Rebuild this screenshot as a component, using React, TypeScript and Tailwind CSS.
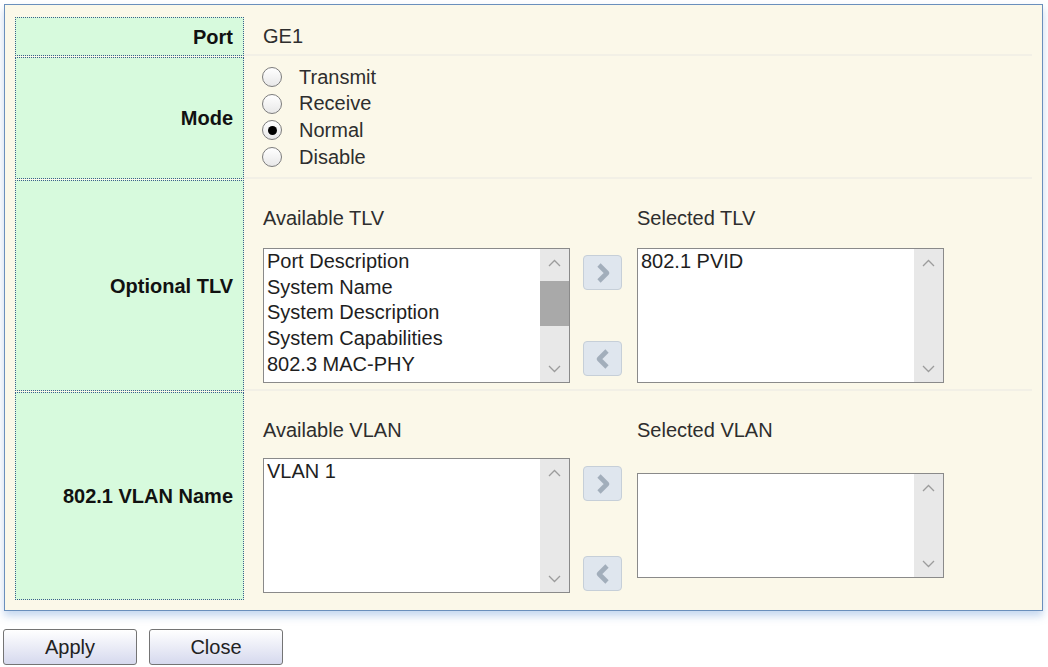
import React from "react";

const Chevron = ({ dir }: { dir: "up" | "down" }) => (
  <svg width="13" height="8" viewBox="0 0 13 8">
    <polyline
      points={dir === "up" ? "1,7 6.5,1.5 12,7" : "1,1 6.5,6.5 12,1"}
      fill="none"
      stroke="#9c9c9c"
      strokeWidth="1.3"
    />
  </svg>
);

const MoveButton = ({ dir }: { dir: "right" | "left" }) => (
  <div className="flex h-[35px] w-[39px] items-center justify-center rounded-[4px] border border-[#c6cfd8] bg-[#dfe6ee]">
    <svg width="18" height="22" viewBox="0 0 18 22">
      <polyline
        points={dir === "right" ? "5,3 13,11 5,19" : "13,3 5,11 13,19"}
        fill="none"
        stroke="#a2aebb"
        strokeWidth="4.6"
        strokeLinejoin="round"
      />
    </svg>
  </div>
);

const ListBox = ({ items, h, thumb }: { items: string[]; h: string; thumb?: boolean }) => (
  <div className={`flex w-[307px] border border-[#8a8a8a] bg-white ${h}`}>
    <div className="flex-1 overflow-hidden pl-[3px] text-[20px] leading-[25.7px] text-[#1e1e1e]">
      {items.map((it) => (
        <div key={it} className="whitespace-nowrap">
          {it}
        </div>
      ))}
    </div>
    <div className="flex w-[29px] flex-col bg-[#e8e8e8]">
      <div className="flex h-[28px] items-center justify-center">
        <Chevron dir="up" />
      </div>
      {thumb && <div className="mt-[4px] h-[45px] bg-[#a9a9a9]" />}
      <div className="flex-1" />
      <div className="flex h-[26px] items-center justify-center">
        <Chevron dir="down" />
      </div>
    </div>
  </div>
);

const Radio = ({ label, checked }: { label: string; checked?: boolean }) => (
  <div className="flex items-center">
    <div className="flex h-[20px] w-[20px] items-center justify-center rounded-full border-[1.5px] border-[#7c7c7c] bg-linear-to-b from-white to-[#e8e8e8]">
      {checked && <div className="h-[9px] w-[9px] rounded-full bg-black" />}
    </div>
    <span className="ml-[17px]">{label}</span>
  </div>
);

const Label = ({ text, h }: { text: string; h: string }) => (
  <div
    className={`flex w-[229px] shrink-0 items-center justify-end border border-dotted border-[#3d5f8c] bg-[#d7fadd] pr-[10px] text-[20px] font-bold text-[#111] ${h}`}
  >
    {text}
  </div>
);

export default function App() {
  return (
    <div className="h-[667px] w-[1048px] overflow-hidden bg-white pt-[4px] font-['Liberation_Sans',Arial,sans-serif] text-[#2e2e2e]">
      <div className="ml-[4px] w-[1039px] border border-[#6a8fbc] bg-[#fbf8e9] px-[10px] pt-[12px] pb-[10px] shadow-[0_5px_8px_rgba(90,140,210,0.35)]">
        <div className="flex flex-col gap-[1px]">
          {/* Port */}
          <div className="flex">
            <Label text="Port" h="h-[39px]" />
            <div className="flex flex-1 items-center border-b-2 border-[#f2f0e6] pl-[19px] text-[20px]">GE1</div>
          </div>

          {/* Mode */}
          <div className="flex">
            <Label text="Mode" h="h-[122px]" />
            <div className="flex flex-1 flex-col justify-center border-b-2 border-[#f2f0e6] pl-[18px] text-[20px] leading-[26.6px]">
              <Radio label="Transmit" />
              <Radio label="Receive" />
              <Radio label="Normal" checked />
              <Radio label="Disable" />
            </div>
          </div>

          {/* Optional TLV */}
          <div className="flex">
            <Label text="Optional TLV" h="h-[211px]" />
            <div className="flex flex-1 border-b-2 border-[#f2f0e6] pt-[27px] pl-[19px] text-[20px]">
              <div>
                <div className="mb-[18px] leading-[23px]">Available TLV</div>
                <ListBox
                  h="h-[135px]"
                  thumb
                  items={["Port Description", "System Name", "System Description", "System Capabilities", "802.3 MAC-PHY"]}
                />
              </div>
              <div className="mt-[41px] ml-[13px] flex h-[135px] flex-col justify-between py-[7px]">
                <MoveButton dir="right" />
                <MoveButton dir="left" />
              </div>
              <div className="ml-[15px]">
                <div className="mb-[18px] leading-[23px]">Selected TLV</div>
                <ListBox h="h-[135px]" items={["802.1 PVID"]} />
              </div>
            </div>
          </div>

          {/* 802.1 VLAN Name */}
          <div className="flex">
            <Label text="802.1 VLAN Name" h="h-[208px]" />
            <div className="flex flex-1 pt-[27px] pl-[19px] text-[20px]">
              <div>
                <div className="mb-[16px] leading-[23px]">Available VLAN</div>
                <ListBox h="h-[135px]" items={["VLAN 1"]} />
              </div>
              <div className="mt-[39px] ml-[13px] flex h-[135px] flex-col justify-between pt-[8px] pb-[2px]">
                <MoveButton dir="right" />
                <MoveButton dir="left" />
              </div>
              <div className="ml-[15px]">
                <div className="mb-[31px] leading-[23px]">Selected VLAN</div>
                <ListBox h="h-[105px]" items={[]} />
              </div>
            </div>
          </div>
        </div>
      </div>

      <div className="mt-[18px] ml-[3px] flex gap-[12px]">
        {["Apply", "Close"].map((b) => (
          <div
            key={b}
            className="flex h-[36px] w-[134px] items-center justify-center rounded-[3px] border border-[#747474] bg-linear-to-b from-white to-[#d6d9ee] text-[20px] text-[#222]"
          >
            {b}
          </div>
        ))}
      </div>
    </div>
  );
}
